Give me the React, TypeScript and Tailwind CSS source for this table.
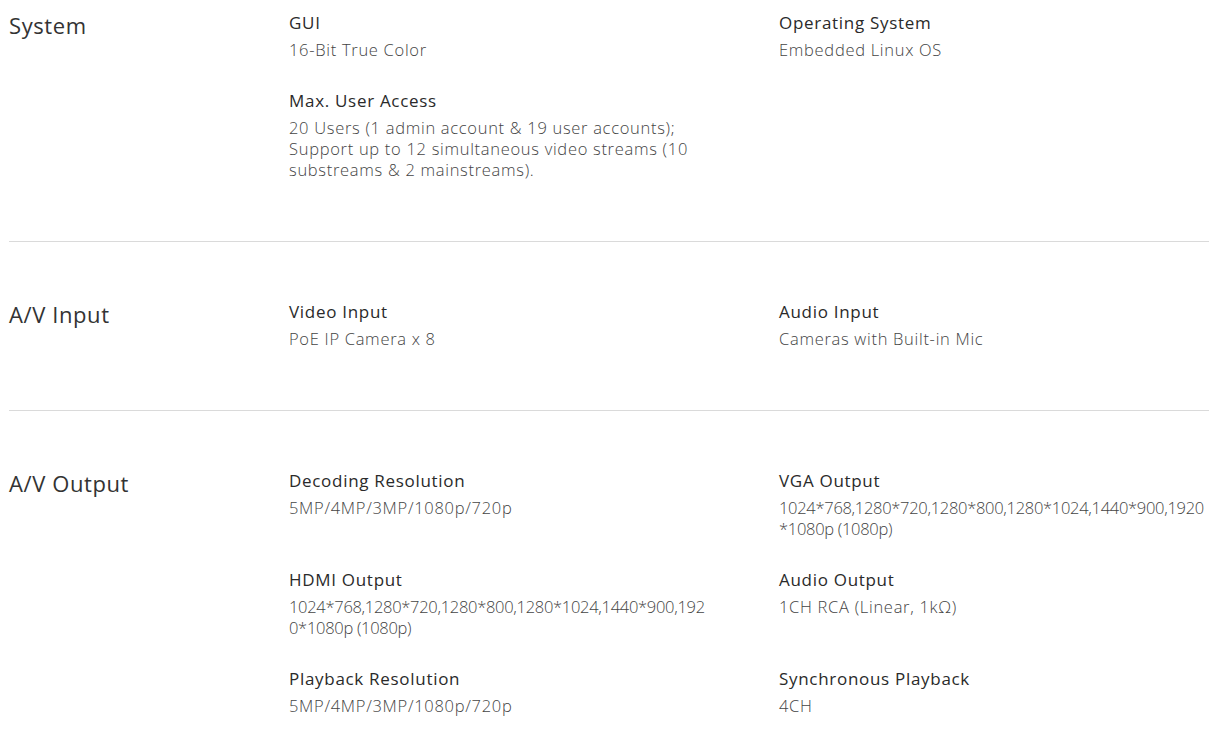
import React from 'react';

type Spec = { title: string; lines: string[]; numeric?: boolean };
type Section = { label: string; items: Spec[] };

const sections: Section[] = [
  {
    label: 'System',
    items: [
      { title: 'GUI', lines: ['16-Bit True Color'] },
      { title: 'Operating System', lines: ['Embedded Linux OS'] },
      {
        title: 'Max. User Access',
        lines: [
          '20 Users (1 admin account & 19 user accounts);',
          'Support up to 12 simultaneous video streams (10',
          'substreams & 2 mainstreams).',
        ],
      },
    ],
  },
  {
    label: 'A/V Input',
    items: [
      { title: 'Video Input', lines: ['PoE IP Camera x 8'] },
      { title: 'Audio Input', lines: ['Cameras with Built-in Mic'] },
    ],
  },
  {
    label: 'A/V Output',
    items: [
      { title: 'Decoding Resolution', lines: ['5MP/4MP/3MP/1080p/720p'] },
      {
        title: 'VGA Output',
        lines: ['1024*768,1280*720,1280*800,1280*1024,1440*900,1920', '*1080p (1080p)'],
        numeric: true,
      },
      {
        title: 'HDMI Output',
        lines: ['1024*768,1280*720,1280*800,1280*1024,1440*900,192', '0*1080p (1080p)'],
        numeric: true,
      },
      { title: 'Audio Output', lines: ['1CH RCA (Linear, 1kΩ)'] },
      { title: 'Playback Resolution', lines: ['5MP/4MP/3MP/1080p/720p'] },
      { title: 'Synchronous Playback', lines: ['4CH'] },
    ],
  },
];

function SpecItem({ spec }: { spec: Spec }) {
  return (
    <div className="flex flex-col gap-[6px]">
      <p className="text-[17px] leading-[21px] tracking-[0.7px] font-medium text-[#2a2a2a]">{spec.title}</p>
      <p
        className={`text-[16.5px] leading-[21px] font-light text-[#444] whitespace-nowrap ${
          spec.numeric ? 'tracking-[-0.3px]' : 'tracking-[0.7px]'
        }`}
      >
        {spec.lines.map((l, i) => (
          <React.Fragment key={i}>
            {i > 0 && <br />}
            {l}
          </React.Fragment>
        ))}
      </p>
    </div>
  );
}

export default function App() {
  return (
    <div className="bg-white min-h-screen font-['Open_Sans','Noto_Sans',sans-serif]">
      <div className="ml-[9px] w-[1200px]">
        {sections.map((s, i) => (
          <div
            key={s.label}
            className={`flex ${i === 0 ? 'pt-[12px] pb-[61px]' : 'pt-[59px] pb-[61px] border-t border-[#dadada]'}`}
          >
            <h2 className="w-[280px] shrink-0 text-[22px] leading-[30px] tracking-[0.6px] text-[#333] -mt-[2px]">
              {s.label}
            </h2>
            <div className="grid grid-cols-[490px_430px] gap-y-[30px]">
              {s.items.map((it) => (
                <SpecItem key={it.title} spec={it} />
              ))}
            </div>
          </div>
        ))}
      </div>
    </div>
  );
}
